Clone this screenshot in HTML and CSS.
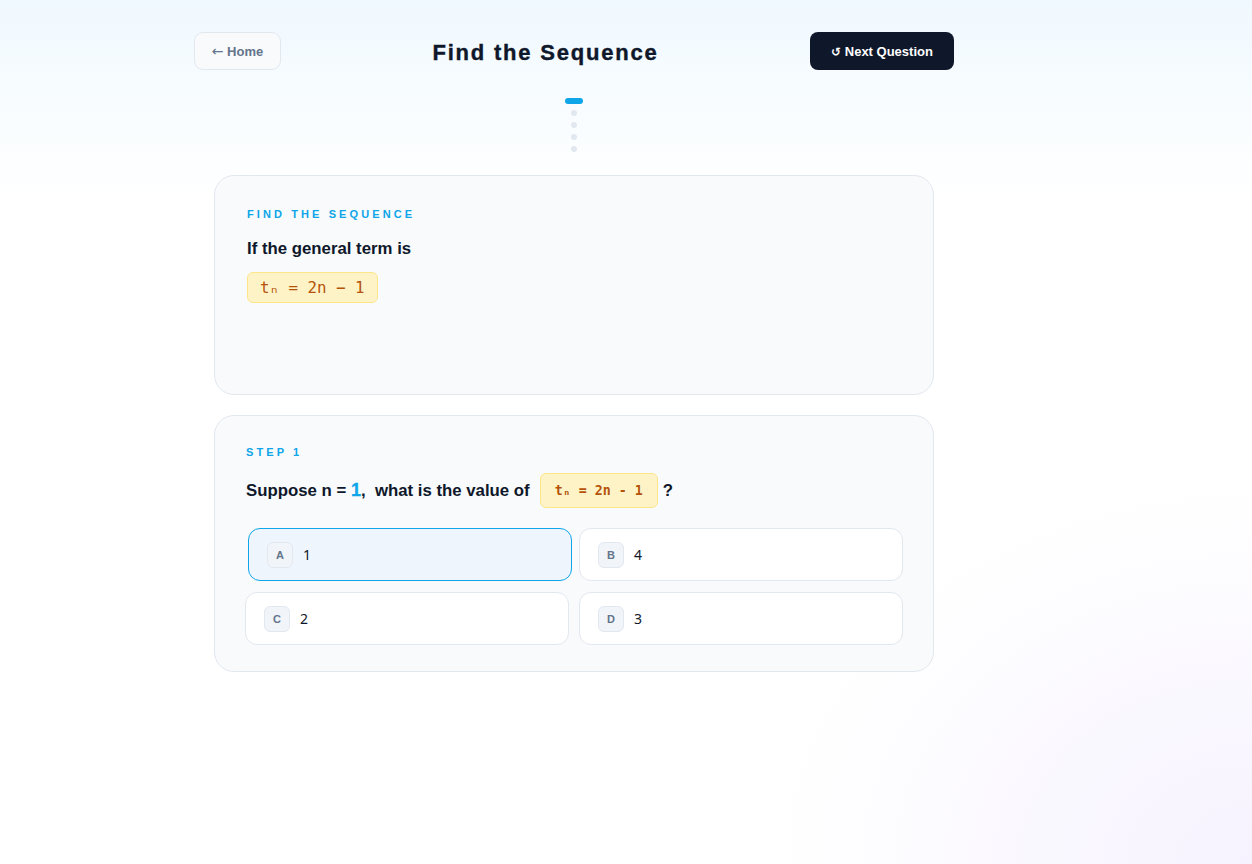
FILE: index.html
```html
<!DOCTYPE html>
<html lang="en">
<head>
<meta charset="utf-8">
<title>Find the Sequence</title>
<link rel="stylesheet" href="styles.css">
</head>
<body>
<div class="page">
  <main class="main">
    <header class="header">
      <button class="btn-home"><span class="arrow">←</span> Home</button>
      <h1 class="title">Find the Sequence</h1>
      <button class="btn-next"><span class="ico">↺</span> Next Question</button>
    </header>

    <div class="progress">
      <span class="dot active"></span>
      <span class="dot"></span>
      <span class="dot"></span>
      <span class="dot"></span>
      <span class="dot"></span>
    </div>

    <section class="card card-intro">
      <div class="label">FIND THE SEQUENCE</div>
      <div class="lead">If the general term is</div>
      <div class="formula">tₙ = 2n − 1</div>
    </section>

    <section class="card card-step">
      <div class="label">STEP 1</div>
      <div class="question">
        <span>Suppose n = <span class="num">1</span>,&nbsp; what is the value of</span>
        <span class="formula small">tₙ = 2n - 1</span>
        <span class="qmark">?</span>
      </div>
      <div class="options">
        <button class="option selected"><span class="letter">A</span><span class="val">1</span></button>
        <button class="option"><span class="letter">B</span><span class="val">4</span></button>
        <button class="option"><span class="letter">C</span><span class="val">2</span></button>
        <button class="option"><span class="letter">D</span><span class="val">3</span></button>
      </div>
    </section>
  </main>
</div>
</body>
</html>
```

FILE: styles.css
```css
* { box-sizing: border-box; }
html, body { margin: 0; padding: 0; }
body {
  min-height: 864px;
  font-family: "Liberation Sans", Arial, sans-serif;
  color: #0f172a;
  background:
    radial-gradient(ellipse 480px 380px at 100% 100%, rgba(240, 234, 255, 0.6), rgba(255,255,255,0) 100%),
    linear-gradient(180deg, #f0f9ff 0px, #ffffff 200px, #ffffff 100%);
}
.page {
  display: flex;
  justify-content: center;
  padding: 32px 104px 40px 0;
}
.main { width: 760px; }

.header {
  display: flex;
  align-items: center;
  justify-content: space-between;
  height: 38px;
}
.btn-home {
  height: 38px;
  width: 87px;
  padding: 0;
  border: 1px solid #e2e8f0;
  background: #f8fafc;
  border-radius: 9px;
  color: #64748b;
  font-family: "Liberation Sans", Arial, sans-serif;
  font-weight: 700;
  font-size: 13px;
}
.btn-home .arrow {
  font-family: "DejaVu Sans", sans-serif;
  font-weight: 400;
  font-size: 14px;
}
.title {
  margin: 0;
  padding-top: 3px;
  font-size: 22px;
  font-weight: 700;
  letter-spacing: 1.8px;
  color: #0f172a;
  line-height: 38px;
  -webkit-text-stroke: 0.4px #0f172a;
}
.btn-next {
  height: 38px;
  width: 144px;
  padding: 0;
  border: none;
  background: #0f172a;
  border-radius: 8px;
  color: #ffffff;
  font-family: "Liberation Sans", Arial, sans-serif;
  font-weight: 700;
  font-size: 13px;
}
.btn-next .ico { font-family: "DejaVu Sans", sans-serif; font-weight: 700; font-size: 12px; }

.progress {
  margin-top: 28px;
  display: flex;
  flex-direction: column;
  align-items: center;
  gap: 6px;
}
.dot {
  width: 6px;
  height: 6px;
  border-radius: 50%;
  background: #e2e8f0;
}
.dot.active {
  width: 18px;
  height: 6px;
  border-radius: 3px;
  background: #0ea5e9;
}

.card {
  margin: 23px 20px 0;
  background: #f8fafc;
  border: 1px solid #e2e8f0;
  border-radius: 20px;
}
.card-intro {
  min-height: 220px;
  padding: 31px 32px;
}
.card-step {
  margin-top: 20px;
  padding: 29px 30px 26px;
}
.label {
  font-size: 11px;
  line-height: 14px;
  font-weight: 700;
  letter-spacing: 3.1px;
  color: #0ea5e9;
}
.card-step .label { padding-left: 1px; }
.lead {
  margin-top: 15px;
  font-size: 16.8px;
  line-height: 25px;
  font-weight: 700;
  color: #0f172a;
}
.formula {
  display: inline-block;
  margin-top: 11px;
  padding: 5px 12px;
  background: #fef3c7;
  border: 1px solid #fde68a;
  border-radius: 6px;
  color: #b45309;
  font-family: "DejaVu Sans Mono", "Liberation Mono", monospace;
  font-size: 15.8px;
  line-height: 19px;
}
.formula.small {
  margin: 0 0 0 10px;
  padding: 8px 14px;
  font-size: 13.3px;
  line-height: 17px;
  font-weight: 700;
}
.question {
  margin-top: 14px;
  display: flex;
  align-items: center;
  height: 35px;
  font-size: 16.8px;
  font-weight: 700;
  color: #0f172a;
  padding-left: 1px;
}
.question .qmark { margin-left: 5px; }
.question .num {
  color: #0ea5e9;
  font-family: "Liberation Sans", Arial, sans-serif;
  font-size: 18px;
  -webkit-text-stroke: 0.3px #0ea5e9;
}
.options {
  margin-top: 20px;
  display: grid;
  grid-template-columns: 1fr 1fr;
  gap: 11px 10px;
}
.option {
  display: flex;
  align-items: center;
  gap: 10px;
  height: 53px;
  padding: 0 18px;
  background: #ffffff;
  border: 1px solid #e2e8f0;
  border-radius: 12px;
  text-align: left;
  font-family: "Noto Sans", "Open Sans", sans-serif;
  font-size: 14px;
  color: #0f172a;
}
.option.selected {
  background: #eef5fc;
  border-color: #0ea5e9;
  transform: translateX(3px);
}
.letter {
  width: 26px;
  height: 26px;
  display: flex;
  align-items: center;
  justify-content: center;
  background: #f1f5f9;
  border: 1px solid #e2e8f0;
  border-radius: 6px;
  font-family: "Liberation Sans", Arial, sans-serif;
  font-weight: 700;
  font-size: 11px;
  color: #64748b;
}
.val { line-height: 20px; }
```
